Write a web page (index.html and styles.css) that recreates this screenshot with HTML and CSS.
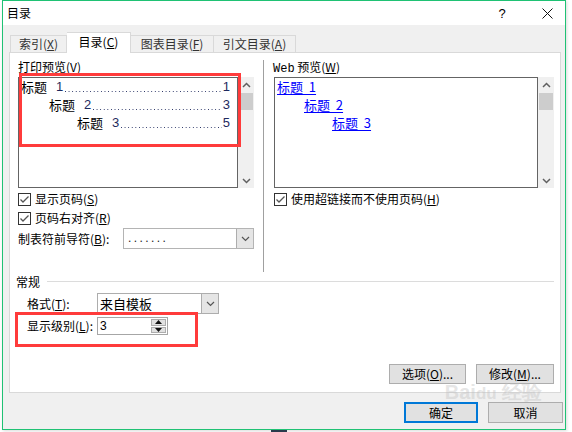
FILE: index.html
```html
<!DOCTYPE html>
<html>
<head>
<meta charset="utf-8">
<link rel="stylesheet" href="styles.css">
</head>
<body>
<div class="window">
  <div class="titlebar">
    <span class="title">目录</span>
    <span class="tb-btn help">?</span>
    <span class="tb-btn close"><svg width="11" height="11" viewBox="0 0 11 11"><path d="M0.5 0.5L10.5 10.5M10.5 0.5L0.5 10.5" stroke="#111" stroke-width="1" fill="none"/></svg></span>
  </div>
  <div class="client">
    <div class="tabs">
      <div class="tab t1">索引(<u>X</u>)</div>
      <div class="tab active t2">目录(<u>C</u>)</div>
      <div class="tab t3">图表目录(<u>F</u>)</div>
      <div class="tab t4">引文目录(<u>A</u>)</div>
    </div>
    <div class="panel">
      <div class="panel-top">
        <div class="col-left">
          <div class="label">打印预览(<u>V</u>)</div>
          <div class="preview">
            <div class="preview-box print-box">
              <div class="toc"><span class="h">标题</span><span class="n">1</span><span class="dots"></span><span class="p">1</span></div>
              <div class="toc lv2"><span class="h">标题</span><span class="n">2</span><span class="dots"></span><span class="p">3</span></div>
              <div class="toc lv3"><span class="h">标题</span><span class="n">3</span><span class="dots"></span><span class="p">5</span></div>
            </div>
            <div class="scrollbar">
              <svg class="arrow" width="9" height="6" viewBox="0 0 9 6"><path d="M1 5L4.5 1.5L8 5" stroke="#606060" stroke-width="1.5" fill="none"/></svg>
              <div class="thumb"></div>
              <div class="spacer"></div>
              <svg class="arrow" width="9" height="6" viewBox="0 0 9 6"><path d="M1 1L4.5 4.5L8 1" stroke="#606060" stroke-width="1.5" fill="none"/></svg>
            </div>
          </div>
          <div class="check first">
            <svg class="cb" width="13" height="13" viewBox="0 0 13 13"><rect x="0.5" y="0.5" width="12" height="12" fill="#fff" stroke="#333"/><path d="M2.5 6.5L5 9L10.5 3.5" stroke="#555" stroke-width="1.3" fill="none"/></svg>
            <span>显示页码(<u>S</u>)</span>
          </div>
          <div class="check">
            <svg class="cb" width="13" height="13" viewBox="0 0 13 13"><rect x="0.5" y="0.5" width="12" height="12" fill="#fff" stroke="#333"/><path d="M2.5 6.5L5 9L10.5 3.5" stroke="#555" stroke-width="1.3" fill="none"/></svg>
            <span>页码右对齐(<u>R</u>)</span>
          </div>
          <div class="field-row leader-row">
            <span class="field-label leader-label">制表符前导符(<u>B</u>):</span>
            <div class="combo leader-combo">
              <span class="combo-text leader-dots">.......</span>
              <span class="drop"><svg width="9" height="6" viewBox="0 0 9 6"><path d="M1 1L4.5 4.5L8 1" stroke="#555" stroke-width="1.2" fill="none"/></svg></span>
            </div>
          </div>
        </div>
        <div class="divider"></div>
        <div class="col-right">
          <div class="label web-label"><span class="mono">Web</span> 预览(<u>W</u>)</div>
          <div class="preview">
            <div class="preview-box web-box">
              <div class="link-line"><a class="link">标题&nbsp;&nbsp;1</a></div>
              <div class="link-line lv2w"><a class="link">标题&nbsp;&nbsp;2</a></div>
              <div class="link-line lv3w"><a class="link">标题&nbsp;&nbsp;3</a></div>
            </div>
            <div class="scrollbar">
              <svg class="arrow" width="9" height="6" viewBox="0 0 9 6"><path d="M1 5L4.5 1.5L8 5" stroke="#606060" stroke-width="1.5" fill="none"/></svg>
              <div class="thumb"></div>
              <div class="spacer"></div>
              <svg class="arrow" width="9" height="6" viewBox="0 0 9 6"><path d="M1 1L4.5 4.5L8 1" stroke="#606060" stroke-width="1.5" fill="none"/></svg>
            </div>
          </div>
          <div class="check first">
            <svg class="cb" width="13" height="13" viewBox="0 0 13 13"><rect x="0.5" y="0.5" width="12" height="12" fill="#fff" stroke="#333"/><path d="M2.5 6.5L5 9L10.5 3.5" stroke="#555" stroke-width="1.3" fill="none"/></svg>
            <span>使用超链接而不使用页码(<u>H</u>)</span>
          </div>
        </div>
      </div>
      <div class="general">
        <div class="group-head"><span>常规</span><div class="group-line"></div></div>
        <div class="field-row format-row">
          <span class="field-label gen-label">格式(<u>T</u>):</span>
          <div class="combo format-combo">
            <span class="combo-text format-text">来自模板</span>
            <span class="drop"><svg width="9" height="6" viewBox="0 0 9 6"><path d="M1 1L4.5 4.5L8 1" stroke="#555" stroke-width="1.2" fill="none"/></svg></span>
          </div>
        </div>
        <div class="field-row level-row">
          <span class="field-label gen-label">显示级别(<u>L</u>):</span>
          <div class="spin">
            <span class="spin-text">3</span>
            <span class="spin-btns">
              <span class="spin-btn"><svg width="7" height="4" viewBox="0 0 7 4"><path d="M0 4L3.5 0L7 4Z" fill="#111"/></svg></span>
              <span class="spin-btn"><svg width="7" height="4" viewBox="0 0 7 4"><path d="M0 0L3.5 4L7 0Z" fill="#111"/></svg></span>
            </span>
          </div>
        </div>
        <div class="panel-buttons">
          <div class="btn opt">选项(<u>O</u>)...</div>
          <div class="btn mod">修改(<u>M</u>)...</div>
        </div>
      </div>
    </div>
    <div class="dialog-buttons">
      <div class="btn default">确定</div>
      <div class="btn cancel">取消</div>
    </div>
    <div class="mark mark1"></div>
    <div class="mark mark2"></div>
    <div class="watermark">
      <div class="wm-big">Bai<span class="wm-du">du</span> 经验</div>
    </div>
  </div>
</div>
<div class="taskbit"></div>
</body>
</html>
```

FILE: styles.css
```css
* { box-sizing: border-box; }
html, body { margin: 0; padding: 0; background: #fff; }
body {
  font-family: "Noto Sans CJK SC", "Liberation Sans", sans-serif;
  font-size: 12px;
  color: #000;
  width: 572px;
  height: 432px;
  overflow: hidden;
  position: relative;
}
u { text-decoration: underline; text-underline-offset: 1px; }

.window {
  margin-left: 2px;
  width: 564px;
  height: 430px;
  border: 1px solid #1fc274;
  box-shadow: 1px 1px 3px rgba(0,0,0,0.15);
  display: flex;
  flex-direction: column;
  background: #f0f0f0;
}

.titlebar {
  height: 24px;
  background: #fff;
  display: flex;
  align-items: center;
  padding-left: 4px;
  padding-right: 3px;
}
.title { font-size: 12px; line-height: 16px; }
.tb-btn { width: 30px; height: 24px; display: flex; align-items: center; justify-content: center; }
.help { margin-left: auto; font-family: "Liberation Sans", sans-serif; font-size: 13px; margin-right: 15px; }

.client {
  flex: 1;
  position: relative;
  padding: 7px 0 0 6px;
}

.tabs {
  display: flex;
  align-items: flex-end;
  height: 20px;
  margin-left: 1px;
  position: relative;
  z-index: 2;
}
.tab {
  height: 17px;
  border: 1px solid #d9d9d9;
  border-bottom: none;
  background: #f0f0f0;
  color: #333;
  display: flex;
  align-items: center;
  justify-content: center;
  line-height: 14px;
  font-size: 12px;
}
.tab.active {
  height: 21px;
  margin-bottom: -1px;
  background: #fff;
  color: #000;
  padding-bottom: 2px;
}
.t1 { width: 57px; }
.t2 { width: 64px; border-left: none; }
.t3 { width: 83px; border-left: none; }
.t4 { width: 82px; border-left: none; }

.panel {
  width: 552px;
  height: 341px;
  border: 1px solid #d9d9d9;
  background: #fff;
  position: relative;
  z-index: 1;
}

.panel-top {
  display: flex;
  height: 221px;
  padding: 6px 0 0 8px;
}
.col-left { width: 236px; }
.divider {
  width: 1px;
  height: 212px;
  margin: 1px 0 0 9px;
  background: #a0a0a0;
}
.col-right { width: 280px; margin-left: 10px; }

.label { height: 16px; line-height: 16px; margin-bottom: 2px; }
.web-label { margin-left: -1px; }
.mono { font-family: "Liberation Mono", monospace; }

.preview { display: flex; height: 111px; }
.preview-box {
  border: 1px solid #646464;
  background: #fff;
  height: 111px;
}
.print-box { width: 220px; padding: 0 7px 0 2px; }
.web-box { width: 264px; padding: 0 0 0 2px; }

.toc {
  display: flex;
  height: 18px;
  line-height: 18px;
  font-size: 13px;
  white-space: nowrap;
}
.toc .h { color: #000; }
.toc .n, .toc .p { color: #1e2a5e; font-family: "Liberation Sans", sans-serif; }
.toc .n { margin-left: 9px; }
.toc .dots {
  flex: 1;
  min-width: 0;
  margin: 0 1px 0 1px;
  background-image: linear-gradient(to right, #2a3466 1px, transparent 1px);
  background-size: 3.6px 1px;
  background-repeat: repeat-x;
  background-position: 1px 13px;
}
.lv2 { padding-left: 28px; }
.lv3 { padding-left: 56px; }

.link-line { height: 18px; line-height: 18px; font-size: 13px; }
.link { color: #0000ff; text-decoration: underline; text-underline-offset: 2px; }
.lv2w { padding-left: 27px; }
.lv3w { padding-left: 55px; }

.scrollbar {
  width: 16px;
  background: #f0f0f0;
  display: flex;
  flex-direction: column;
  align-items: center;
  padding: 5px 0 4px;
}
.thumb { width: 14px; height: 17px; background: #cdcdcd; margin-top: 5px; }
.spacer { flex: 1; }

.check {
  display: flex;
  align-items: center;
  height: 16px;
  line-height: 16px;
  margin-top: 3px;
}
.check .cb { margin-right: 4px; flex: none; }

.field-row { display: flex; align-items: center; }
.field-label { line-height: 16px; }
.leader-row { margin-top: 2px; height: 21px; }
.leader-label { width: 105px; }

.combo {
  display: flex;
  height: 21px;
  border: 1px solid #b4b4b4;
  background: #fff;
}
.combo-text { flex: 1; line-height: 19px; padding-left: 4px; }
.drop {
  width: 17px;
  background: #e5e5e5;
  border-left: 1px solid #adadad;
  display: flex;
  align-items: center;
  justify-content: center;
}
.leader-combo { width: 131px; }
.leader-dots { font-family: "Liberation Sans", sans-serif; letter-spacing: 2.4px; color: #222; }
.format-combo { width: 122px; border-color: #adadad; }
.format-text { font-size: 13px; padding-left: 2px; }

.general { padding: 0 6px 0 6px; }
.group-head { display: flex; align-items: center; height: 16px; line-height: 16px; }
.group-line { flex: 1; border-top: 1px solid #dcdcdc; margin-left: 7px; margin-top: -1px; }

.gen-label { width: 81px; padding-left: 11px; }
.format-row { margin-top: 3px; height: 21px; }
.level-row { margin-top: 3px; height: 18px; }

.spin {
  width: 71px;
  height: 18px;
  border: 1px solid #a6a6a6;
  display: flex;
  background: #fff;
}
.spin-text { flex: 1; line-height: 16px; padding-left: 2px; font-family: "Liberation Sans", sans-serif; font-size: 12px; }
.spin-btns { width: 16px; display: flex; flex-direction: column; padding: 1px 1px 1px 0; gap: 1px; }
.spin-btn {
  flex: 1;
  background: #e1e1e1;
  border: 1px solid #adadad;
  display: flex;
  align-items: center;
  justify-content: center;
}

.panel-buttons {
  display: flex;
  justify-content: flex-end;
  gap: 10px;
  margin-top: 29px;
}
.btn {
  height: 20px;
  border: 1px solid #adadad;
  background: #e1e1e1;
  display: flex;
  align-items: center;
  justify-content: center;
  line-height: 16px;
}
.opt { width: 77px; }
.mod { width: 78px; }

.dialog-buttons {
  display: flex;
  justify-content: flex-end;
  gap: 10px;
  margin-top: 9px;
  padding-right: 2px;
}
.dialog-buttons .btn { height: 21px; }
.default { width: 74px; border: 2px solid #0078d7; }
.cancel { width: 75px; }

.watermark {
  position: absolute;
  left: 433px;
  top: 357px;
  width: 115px;
  color: rgba(190,190,190,0.4);
  pointer-events: none;
  text-align: center;
  z-index: 3;
}
.wm-big { font-family: "Liberation Sans", sans-serif; font-size: 20px; font-weight: bold; line-height: 20px; }
.wm-du { font-size: 17px; }

.mark {
  position: absolute;
  border: 3px solid #ff3b3b;
  z-index: 4;
  pointer-events: none;
}
.mark1 { left: 16px; top: 48px; width: 222px; height: 74px; }
.mark2 { left: 12px; top: 287px; width: 183px; height: 35px; }

.taskbit {
  position: absolute;
  left: 271px;
  top: 430px;
  width: 16px;
  height: 2px;
  background: #2a3a4c;
}
```
